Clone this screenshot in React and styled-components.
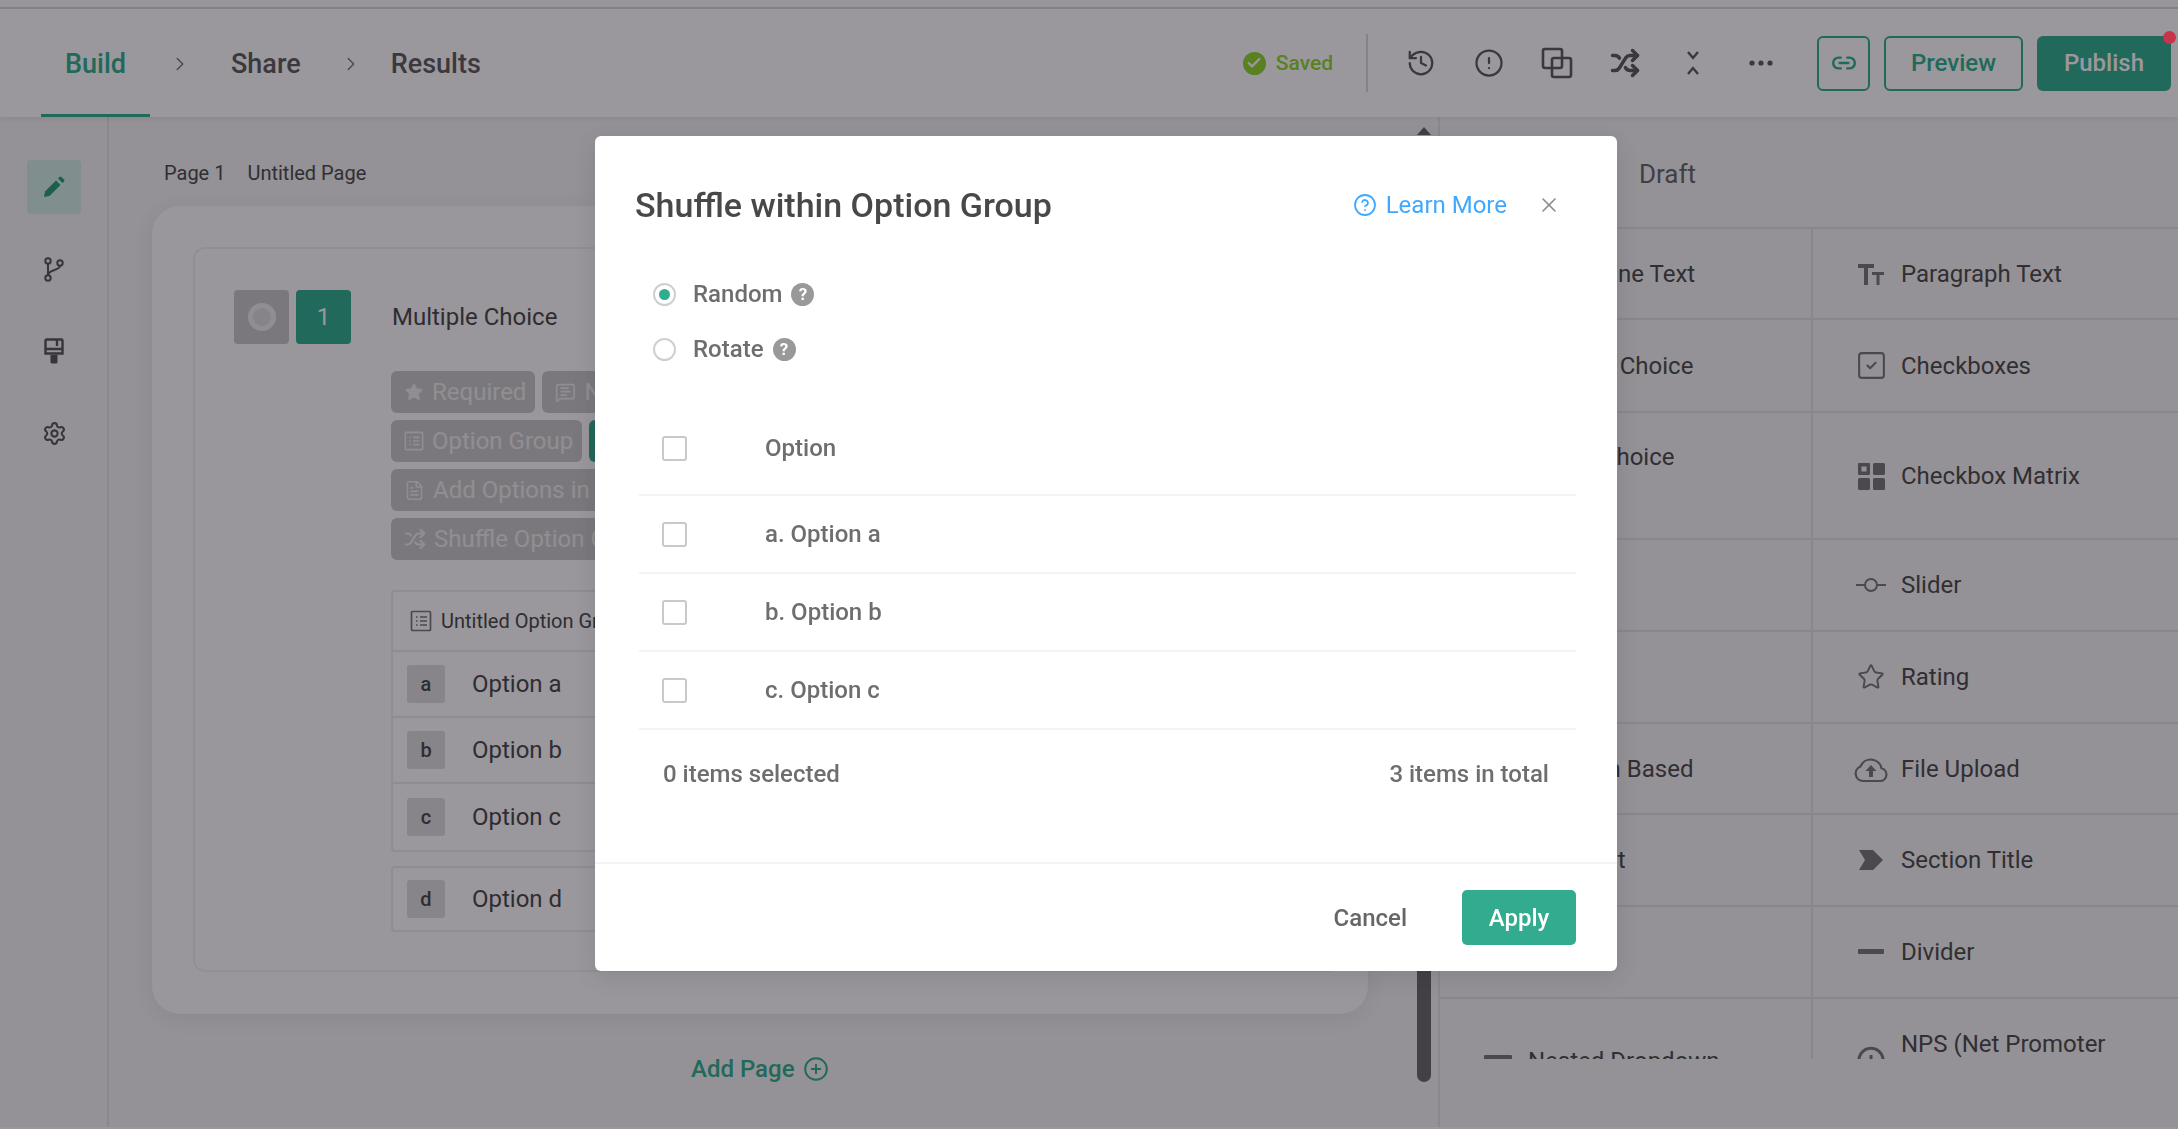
import React from "react";
import styled, { createGlobalStyle } from "styled-components";
import { CircleAlert, ChevronRight, History, Link2, Shuffle, Star, Check, X, CircleHelp, CirclePlus, Settings, SquareCheck, FileText, MessageSquareText } from "lucide-react";

const GlobalStyle = createGlobalStyle`
  html, body {
    margin: 0;
    padding: 0;
    background: #fff;
  }
  body {
    font-family: Roboto, "Liberation Sans", sans-serif;
    overflow: hidden;
  }
  * {
    box-sizing: border-box;
  }
`;

const green = "#2fae8d";

const TypeIcon = ({ kind }) => {
  if (kind === "para") {
    return (
      <svg width="30" height="26" viewBox="0 0 30 26" fill="#777">
        <path d="M2 3h16v4h-6v17H8V7H2z" />
        <path d="M16 11h12v3h-4.500v10h-3V14H16z" />
      </svg>
    );
  }
  if (kind === "check") return <SquareCheck size={33} strokeWidth={1.5} color="#777" />;
  if (kind === "matrix") {
    return (
      <svg width="28" height="28" viewBox="0 0 28 28" fill="#777">
        <path fillRule="evenodd" d="M2 1h10a1 1 0 0 1 1 1v10a1 1 0 0 1-1 1H2a1 1 0 0 1-1-1V2a1 1 0 0 1 1-1zm2.500 3.500v5h5v-5z" />
        <rect x="16" y="1" width="12" height="12" rx="1.500" />
        <rect x="1" y="16" width="12" height="12" rx="1.500" />
        <rect x="16" y="16" width="12" height="12" rx="1.500" />
      </svg>
    );
  }
  if (kind === "slider") {
    return (
      <svg width="30" height="18" viewBox="0 0 30 18" fill="none" stroke="#777" strokeWidth="2">
        <circle cx="15" cy="9" r="6" />
        <path d="M0 9h9M21 9h9" />
      </svg>
    );
  }
  if (kind === "star") return <Star size={28} strokeWidth={1.7} color="#777" />;
  if (kind === "upload") {
    return (
      <svg width="34" height="28" viewBox="0 0 34 28" fill="none" stroke="#777" strokeWidth="2.200">
        <path d="M9 26h17a6.500 6.500 0 0 0 1.500-12.800A11 11 0 0 0 6.500 11.500 7.500 7.500 0 0 0 9 26z" />
        <path d="M17 10l5.500 6h-3.500v6h-4v-6h-3.500z" fill="#777" stroke="none" />
      </svg>
    );
  }
  if (kind === "section") {
    return (
      <svg width="26" height="24" viewBox="0 0 26 24" fill="#777">
        <path d="M1 2h14l10 10-10 10H1l6-10z" />
      </svg>
    );
  }
  if (kind === "divider") {
    return (
      <svg width="26" height="6" viewBox="0 0 26 6" fill="#777">
        <rect width="26" height="5" rx="1" />
      </svg>
    );
  }
  if (kind === "nps") {
    return (
      <svg width="28" height="28" viewBox="0 0 28 28" fill="none" stroke="#777" strokeWidth="3">
        <path d="M3 24a12 12 0 1 1 22 0" />
        <path d="M14 14v5" />
      </svg>
    );
  }
  return null;
};

const OptionGroupIcon = ({ color, size }) => (
  <svg width={size} height={size} viewBox="0 0 22 22" fill="none" stroke={color} strokeWidth="1.700">
    <rect x="1.500" y="1.500" width="19" height="19" rx="1" />
    <path d="M6 7h1.500M6 11h1.500M6 15h1.500M10 7h7M10 11h7M10 15h7" />
  </svg>
);

const App = () => {
  const rows = [
    { left: "Single Line Text", right: "Paragraph Text", icon: "para", h: 91 },
    { left: "Multiple Choice", right: "Checkboxes", icon: "check", h: 93 },
    { left: "Image Choice", right: "Checkbox Matrix", icon: "matrix", h: 127, top: true },
    { right: "Slider", icon: "slider", h: 92 },
    { right: "Rating", icon: "star", h: 92 },
    { left: "Location Based", right: "File Upload", icon: "upload", h: 91 },
    { left: "Rich Text", right: "Section Title", icon: "section", h: 92 },
    { right: "Divider", icon: "divider", h: 92 },
  ];

  return (
    <>
      <GlobalStyle />
      <Shell>
        <Header>
          <Steps>
            <ActiveStep>Build</ActiveStep>
            <StepArrow $left={19} $right={40}><ChevronRight size={22} strokeWidth={1.6} /></StepArrow>
            <Step>Share</Step>
            <StepArrow $left={39} $right={29}><ChevronRight size={22} strokeWidth={1.6} /></StepArrow>
            <Step>Results</Step>
          </Steps>
          <Actions>
            <Saved>
              <SavedDot><Check size={16} strokeWidth={3.500} color="#fff" /></SavedDot>
              Saved
            </Saved>
            <HeaderDivider />
            <HeaderIcons>
              <HeaderIcon><History size={30} strokeWidth={1.800} /></HeaderIcon>
              <HeaderIcon><CircleAlert size={30} strokeWidth={1.800} /></HeaderIcon>
              <HeaderIcon>
                <svg width="32" height="32" viewBox="0 0 32 32" fill="none" stroke="currentColor" strokeWidth="2.600">
                  <rect x="2" y="2" width="19" height="19" rx="2" />
                  <rect x="11" y="11" width="19" height="19" rx="2" />
                </svg>
              </HeaderIcon>
              <HeaderIcon><Shuffle size={30} strokeWidth={2.800} /></HeaderIcon>
              <HeaderIcon>
                <svg width="18" height="28" viewBox="0 0 18 28" fill="none" stroke="currentColor" strokeWidth="2.400">
                  <path d="M4 3l5 6 5-6M4 25l5-6 5 6" />
                </svg>
              </HeaderIcon>
              <HeaderIcon>
                <svg width="24" height="6" viewBox="0 0 24 6" fill="currentColor">
                  <circle cx="3" cy="3" r="2.600" />
                  <circle cx="12" cy="3" r="2.600" />
                  <circle cx="21" cy="3" r="2.600" />
                </svg>
              </HeaderIcon>
            </HeaderIcons>
            <LinkButton><Link2 size={26} strokeWidth={2.200} /></LinkButton>
            <PreviewButton>Preview</PreviewButton>
            <PublishButton>Publish</PublishButton>
          </Actions>
        </Header>

        <Body>
          <Sidebar>
            <SideItem $active>
              <svg width="22" height="22" viewBox="0 0 22 22" fill="#2a9c78">
                <path d="M1 21l1-5.500L13 4.500l4.500 4.500L6.500 20z" />
                <path d="M15 2.500l1.500-1.500a1.500 1.500 0 0 1 2 0l2.500 2.500a1.500 1.500 0 0 1 0 2L19.500 7z" />
              </svg>
            </SideItem>
            <SideItem>
              <svg width="20" height="25" viewBox="0 0 20 25" fill="none" stroke="#555" strokeWidth="2">
                <circle cx="4" cy="4" r="2.700" />
                <circle cx="16" cy="6" r="2.700" />
                <circle cx="4" cy="21" r="2.700" />
                <path d="M4 6.700v11.600M16 8.700c0 5-12 3.500-12 9.600" />
              </svg>
            </SideItem>
            <SideItem>
              <svg width="20" height="26" viewBox="0 0 20 26" fill="none" stroke="#555" strokeWidth="2.400">
                <path d="M2.500 1.500h15a1 1 0 0 1 1 1v13h-17v-13a1 1 0 0 1 1-1z" />
                <path d="M1.500 11h17M13 2v6" />
                <path d="M6.500 17h7v7a1.500 1.500 0 0 1-1.500 1.500H8A1.500 1.500 0 0 1 6.500 24z" fill="#555" stroke="none" />
              </svg>
            </SideItem>
            <SideItem><Settings size={25} strokeWidth={2} color="#555" /></SideItem>
          </Sidebar>

          <Canvas>
            <PageTitle>
              <span>Page 1</span>
              <span>Untitled Page</span>
            </PageTitle>
            <PageCard>
              <QuestionCard>
                <QuestionHead>
                  <TypeBox><Ring /></TypeBox>
                  <NumberBox>1</NumberBox>
                  <QuestionName>Multiple Choice</QuestionName>
                </QuestionHead>
                <Chips>
                  <ChipRow>
                    <Chip><Star size={20} fill="#eee" strokeWidth={1} />Required</Chip>
                    <Chip><MessageSquareText size={21} strokeWidth={1.8} />Note</Chip>
                  </ChipRow>
                  <ChipRow>
                    <Chip><OptionGroupIcon color="#eee" size={20} />Option Group</Chip>
                    <GreenChip />
                  </ChipRow>
                  <ChipRow>
                    <Chip><FileText size={21} strokeWidth={1.8} />Add Options in Bulk</Chip>
                  </ChipRow>
                  <ChipRow>
                    <Chip><Shuffle size={22} strokeWidth={2.400} />Shuffle Option Group</Chip>
                  </ChipRow>
                </Chips>
                <GroupCard>
                  <GroupHead>
                    <OptionGroupIcon color="#777" size={22} />
                    Untitled Option Group
                  </GroupHead>
                  {["a", "b", "c"].map((letter) => (
                    <OptionRow key={letter}>
                      <Badge>{letter}</Badge>
                      Option {letter}
                    </OptionRow>
                  ))}
                </GroupCard>
                <LoneOption>
                  <Badge>d</Badge>
                  Option d
                </LoneOption>
              </QuestionCard>
            </PageCard>
            <AddPage>
              Add Page
              <CirclePlus size={26} strokeWidth={1.800} />
            </AddPage>
            <ScrollTrack>
              <ScrollArrow />
              <ScrollThumb />
            </ScrollTrack>
          </Canvas>

          <Panel>
            <PanelTitle>Draft</PanelTitle>
            <TypeGrid>
              {rows.map((row) => (
                <TypeRow key={row.right} $h={row.h}>
                  <TypeCell $top={row.top} $left>
                    {row.left}
                  </TypeCell>
                  <TypeCell>
                    <IconSlot><TypeIcon kind={row.icon} /></IconSlot>
                    {row.right}
                  </TypeCell>
                </TypeRow>
              ))}
              <TypeRow $h={60} $last>
                <ClippedCell $left>
                  <NestedIcon />
                  <NestedLabel>Nested Dropdown</NestedLabel>
                </ClippedCell>
                <ClippedCell>
                  <NpsSlot><TypeIcon kind="nps" /></NpsSlot>
                  <NpsLabel>NPS (Net Promoter</NpsLabel>
                </ClippedCell>
              </TypeRow>
            </TypeGrid>
          </Panel>
        </Body>
      </Shell>

      <Overlay>
        <RedDot />
        <Modal>
          <ModalHead>
            <ModalTitle>Shuffle within Option Group</ModalTitle>
            <LearnMore><CircleHelp size={24} strokeWidth={1.800} />Learn More</LearnMore>
            <CloseButton><X size={24} strokeWidth={1.600} /></CloseButton>
          </ModalHead>
          <Radios>
            <RadioLine>
              <Radio $on />
              Random
              <Hint>?</Hint>
            </RadioLine>
            <RadioLine>
              <Radio />
              Rotate
              <Hint>?</Hint>
            </RadioLine>
          </Radios>
          <Table>
            <TableHead>
              <Box />
              Option
            </TableHead>
            {["a. Option a", "b. Option b", "c. Option c"].map((label) => (
              <TableRow key={label}>
                <Box />
                {label}
              </TableRow>
            ))}
          </Table>
          <Totals>
            <span>0 items selected</span>
            <span>3 items in total</span>
          </Totals>
          <ModalFoot>
            <CancelButton>Cancel</CancelButton>
            <ApplyButton>Apply</ApplyButton>
          </ModalFoot>
        </Modal>
      </Overlay>
    </>
  );
};

export default App;

const Shell = styled.div`
  width: 2178px;
  height: 1129px;
  display: flex;
  flex-direction: column;
  overflow: hidden;
  background: #f5f5f5;
  border-bottom: 2px solid #fff;
`;

const Header = styled.header`
  height: 117px;
  flex: none;
  border-top: 7px solid #fbfbfb;
  display: flex;
  justify-content: space-between;
  align-items: stretch;
  padding: 0 7px 0 41px;
  background: #fff;
  box-shadow: 0 2px 6px rgba(0, 0, 0, 0.08);
  position: relative;
  z-index: 1;
  &::before {
    content: "";
    position: absolute;
    left: 0;
    right: 0;
    top: 0;
    height: 2px;
    background: #d8d8d8;
  }
`;

const Steps = styled.nav`
  display: flex;
  align-items: center;
  font-size: 27px;
  font-weight: 500;
  color: #5c5c5c;
`;

const Step = styled.span`
  padding-top: 3px;
`;

const ActiveStep = styled.span`
  width: 109px;
  align-self: stretch;
  display: flex;
  align-items: center;
  justify-content: center;
  padding-top: 6px;
  color: ${green};
  border-bottom: 3px solid ${green};
`;

const StepArrow = styled.span`
  display: flex;
  margin: 3px ${(p) => p.$right}px 0 ${(p) => p.$left}px;
  color: #777;
`;

const Actions = styled.div`
  display: flex;
  align-items: center;
  padding-top: 2px;
`;

const Saved = styled.div`
  display: flex;
  align-items: center;
  gap: 10px;
  font-size: 21px;
  font-weight: 500;
  color: #8fd62c;
`;

const SavedDot = styled.span`
  width: 23px;
  height: 23px;
  border-radius: 50%;
  background: #8fd62c;
  display: flex;
  align-items: center;
  justify-content: center;
`;

const HeaderDivider = styled.span`
  width: 2px;
  height: 58px;
  margin: 0 19px 0 33px;
  background: #d9d9d9;
`;

const HeaderIcons = styled.div`
  display: flex;
  align-items: center;
  margin-right: 22px;
`;

const HeaderIcon = styled.span`
  width: 68px;
  height: 40px;
  display: flex;
  align-items: center;
  justify-content: center;
  color: #5a5a5a;
`;

const LinkButton = styled.span`
  width: 53px;
  height: 55px;
  margin-right: 14px;
  border: 2px solid ${green};
  border-radius: 6px;
  display: flex;
  align-items: center;
  justify-content: center;
  color: ${green};
`;

const PreviewButton = styled.span`
  width: 139px;
  height: 55px;
  margin-right: 14px;
  border: 2px solid ${green};
  border-radius: 6px;
  display: flex;
  align-items: center;
  justify-content: center;
  font-size: 24px;
  font-weight: 500;
  color: ${green};
`;

const PublishButton = styled.span`
  width: 134px;
  height: 55px;
  border-radius: 6px;
  background: ${green};
  display: flex;
  align-items: center;
  justify-content: center;
  font-size: 24px;
  font-weight: 500;
  color: #fff;
`;

const RedDot = styled.i`
  position: absolute;
  left: 2163px;
  top: 31px;
  width: 13px;
  height: 13px;
  border-radius: 50%;
  background: #c8354b;
`;

const Body = styled.div`
  flex: 1;
  min-height: 0;
  display: flex;
`;

const Sidebar = styled.aside`
  width: 109px;
  flex: none;
  border-right: 2px solid #e4e4e4;
  padding: 43px 0 0 27px;
  display: flex;
  flex-direction: column;
  gap: 28px;
`;

const SideItem = styled.span`
  width: 54px;
  height: 54px;
  display: flex;
  align-items: center;
  justify-content: center;
  border-radius: 4px;
  background: ${(p) => (p.$active ? "#d5eee7" : "transparent")};
`;

const Canvas = styled.main`
  width: 1329px;
  flex: none;
  position: relative;
  padding: 42px 0 0 55px;
`;

const PageTitle = styled.div`
  display: flex;
  gap: 22px;
  font-size: 20px;
  color: #4a4a4a;
  line-height: 28px;
`;

const PageCard = styled.section`
  width: 1216px;
  height: 808px;
  margin: 19px 0 0 -12px;
  padding: 41px 28px 0 41px;
  border-radius: 28px;
  background: #fdfdfd;
  box-shadow: 0 4px 28px rgba(0, 0, 0, 0.08);
`;

const QuestionCard = styled.div`
  height: 725px;
  padding: 41px 0 0 39px;
  border: 2px solid #f0f0f0;
  border-radius: 12px;
`;

const QuestionHead = styled.div`
  display: flex;
  align-items: center;
  gap: 7px;
`;

const TypeBox = styled.span`
  width: 55px;
  height: 54px;
  border-radius: 4px;
  background: #c9c9c9;
  display: flex;
  align-items: center;
  justify-content: center;
`;

const Ring = styled.i`
  width: 28px;
  height: 28px;
  border-radius: 50%;
  border: 5px solid #eee;
  background: #dcdcdc;
`;

const NumberBox = styled(TypeBox)`
  background: ${green};
  color: #fff;
  font-size: 24px;
`;

const QuestionName = styled.span`
  margin-left: 34px;
  font-size: 24px;
  color: #484848;
`;

const Chips = styled.div`
  display: flex;
  flex-direction: column;
  gap: 7px;
  margin: 27px 0 0 157px;
`;

const ChipRow = styled.div`
  display: flex;
  gap: 7px;
  white-space: nowrap;
`;

const Chip = styled.span`
  height: 42px;
  padding: 0 9px 0 13px;
  display: inline-flex;
  align-items: center;
  gap: 8px;
  border-radius: 6px;
  background: #c9c9c9;
  font-size: 24px;
  color: #eee;
`;

const GreenChip = styled.span`
  width: 40px;
  height: 42px;
  border-radius: 6px;
  background: ${green};
`;

const GroupCard = styled.div`
  width: 700px;
  margin: 30px 0 0 157px;
  background: #fff;
  border: 2px solid #ececec;
  border-radius: 4px;
`;

const GroupHead = styled.div`
  height: 60px;
  padding-left: 17px;
  display: flex;
  align-items: center;
  gap: 9px;
  font-size: 20px;
  color: #484848;
  border-bottom: 2px solid #ececec;
`;

const OptionRow = styled.div`
  height: 66px;
  padding-left: 14px;
  display: flex;
  align-items: center;
  font-size: 24px;
  color: #484848;
  border-bottom: 2px solid #ececec;
  &:last-child {
    border-bottom: 0;
  }
`;

const Badge = styled.span`
  width: 38px;
  height: 38px;
  margin-right: 27px;
  border-radius: 3px;
  background: #dedede;
  display: flex;
  align-items: center;
  justify-content: center;
  font-size: 20px;
  font-weight: 500;
  color: #484848;
`;

const LoneOption = styled(OptionRow)`
  width: 700px;
  margin: 14px 0 0 157px;
  background: #fff;
  border: 2px solid #ececec;
  border-radius: 4px;
  &:last-child {
    border-bottom: 2px solid #ececec;
  }
`;

const AddPage = styled.div`
  display: flex;
  align-items: center;
  gap: 8px;
  margin: 41px 0 0 527px;
  font-size: 24px;
  font-weight: 500;
  color: ${green};
`;

const ScrollTrack = styled.div`
  position: absolute;
  left: 1308px;
  top: 10px;
  width: 14px;
  display: flex;
  flex-direction: column;
  align-items: center;
`;

const ScrollArrow = styled.i`
  width: 0;
  height: 0;
  border-left: 7px solid transparent;
  border-right: 7px solid transparent;
  border-bottom: 8px solid #6a6a6a;
`;

const ScrollThumb = styled.i`
  width: 14px;
  height: 945px;
  margin-top: 2px;
  border-radius: 0 0 7px 7px;
  background: #6a6a6a;
`;

const Panel = styled.aside`
  flex: 1;
  border-left: 2px solid #e4e4e4;
  min-width: 0;
`;

const PanelTitle = styled.div`
  height: 112px;
  padding: 39px 0 0 199px;
  font-size: 26px;
  line-height: 36px;
  color: #666;
  border-bottom: 2px solid #e2e2e2;
`;

const TypeGrid = styled.div`
  display: flex;
  flex-direction: column;
`;

const TypeRow = styled.div`
  height: ${(p) => p.$h}px;
  display: grid;
  grid-template-columns: 373px 1fr;
  border-bottom: ${(p) => (p.$last ? "0" : "2px solid #e2e2e2")};
  font-size: 24px;
  color: #4a4a4a;
  overflow: hidden;
`;

const TypeCell = styled.div`
  display: flex;
  align-items: ${(p) => (p.$top ? "flex-start" : "center")};
  padding-top: ${(p) => (p.$top ? "30px" : "0")};
  padding-left: ${(p) => (p.$left ? "88px" : "0")};
  border-right: ${(p) => (p.$left ? "2px solid #e2e2e2" : "0")};
`;

const IconSlot = styled.span`
  width: 88px;
  padding-left: 28px;
  display: flex;
  align-items: center;
  justify-content: center;
`;

const ClippedCell = styled(TypeCell)`
  position: relative;
  align-items: flex-start;
  padding-left: 0;
`;

const NestedIcon = styled.i`
  position: absolute;
  left: 44px;
  top: 56px;
  width: 28px;
  height: 6px;
  border-radius: 1px;
  background: #777;
`;

const NestedLabel = styled.span`
  position: absolute;
  left: 88px;
  top: 48px;
  white-space: nowrap;
`;

const NpsSlot = styled.span`
  position: absolute;
  left: 44px;
  top: 42px;
`;

const NpsLabel = styled.span`
  position: absolute;
  left: 88px;
  top: 31px;
  white-space: nowrap;
`;

const Overlay = styled.div`
  position: fixed;
  inset: 0;
  z-index: 10;
  padding: 136px 0 0 595px;
  background: rgba(15, 10, 20, 0.42);
`;

const Modal = styled.div`
  width: 1022px;
  height: 835px;
  border-radius: 6px;
  background: #fff;
  color: #666;
  display: flex;
  flex-direction: column;
  box-shadow: 0 6px 24px rgba(0, 0, 0, 0.1);
`;

const ModalHead = styled.div`
  height: 103px;
  flex: none;
  padding: 35px 0 0 40px;
  display: flex;
  align-items: center;
`;

const ModalTitle = styled.h2`
  flex: 1;
  margin: 0;
  font-size: 34px;
  font-weight: 500;
  color: #484848;
`;

const LearnMore = styled.span`
  display: flex;
  align-items: center;
  gap: 9px;
  font-size: 24px;
  color: #40a9ff;
`;

const CloseButton = styled.span`
  display: flex;
  margin: 0 56px 0 30px;
  color: #8a8a8a;
`;

const Radios = styled.div`
  display: flex;
  flex-direction: column;
  gap: 27px;
  padding: 41px 0 0 58px;
`;

const RadioLine = styled.label`
  height: 28px;
  display: flex;
  align-items: center;
  font-size: 24px;
  font-weight: 500;
  color: #6e6e6e;
`;

const Radio = styled.i`
  width: 23px;
  height: 23px;
  margin-right: 17px;
  border-radius: 50%;
  border: 2px solid #cfcfcf;
  display: flex;
  align-items: center;
  justify-content: center;
  &::after {
    content: "";
    width: 11px;
    height: 11px;
    border-radius: 50%;
    background: ${(p) => (p.$on ? green : "transparent")};
  }
`;

const Hint = styled.i`
  width: 23px;
  height: 23px;
  margin-left: 9px;
  border-radius: 50%;
  background: #999;
  color: #fff;
  font-size: 17px;
  font-style: normal;
  font-weight: 700;
  display: flex;
  align-items: center;
  justify-content: center;
`;

const Table = styled.div`
  margin: 39px 41px 0 44px;
`;

const Row = styled.div`
  display: flex;
  align-items: center;
  padding-left: 23px;
  border-bottom: 2px solid #f3f2f4;
  font-size: 24px;
  font-weight: 500;
  color: #6e6e6e;
`;

const TableHead = styled(Row)`
  height: 94px;
`;

const TableRow = styled(Row)`
  height: 78px;
`;

const Box = styled.i`
  width: 25px;
  height: 25px;
  margin-right: 78px;
  border: 2px solid #c9c9c9;
  border-radius: 3px;
`;

const Totals = styled.div`
  height: 132px;
  padding: 29px 68px 0 68px;
  display: flex;
  justify-content: space-between;
  align-items: flex-start;
  font-size: 24px;
  font-weight: 500;
  line-height: 30px;
  color: #6e6e6e;
`;

const ModalFoot = styled.div`
  flex: 1;
  padding-right: 41px;
  border-top: 2px solid #f3f2f4;
  display: flex;
  align-items: center;
  justify-content: flex-end;
  gap: 55px;
`;

const CancelButton = styled.span`
  font-size: 24px;
  font-weight: 500;
  color: #666;
`;

const ApplyButton = styled.span`
  width: 114px;
  height: 55px;
  border-radius: 5px;
  background: #33ab8f;
  color: #fff;
  font-size: 24px;
  font-weight: 500;
  display: flex;
  align-items: center;
  justify-content: center;
`;
